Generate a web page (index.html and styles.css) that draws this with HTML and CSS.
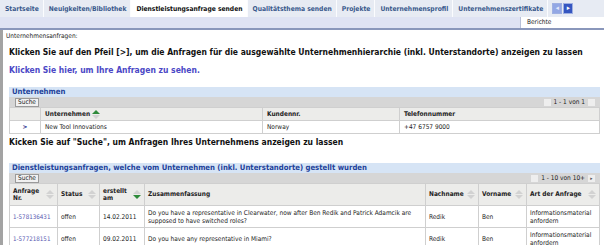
FILE: index.html
```html
<!DOCTYPE html>
<html lang="de">
<head>
    <meta charset="UTF-8">
    <title>Dienstleistungsanfrage senden</title>
    <link rel="stylesheet" href="styles.css">
</head>
<body>
    <div class="tabbar">
        <span class="tab">Startseite</span>
        <span class="tab">Neuigkeiten/Bibliothek</span>
        <span class="tab active">Dienstleistungsanfrage senden</span>
        <span class="tab">Qualitätsthema senden</span>
        <span class="tab">Projekte</span>
        <span class="tab">Unternehmensprofil</span>
        <span class="tab">Unternehmenszertifikate</span>
        <span class="tab-nav">
            <span class="nav-btn off">&#9666;</span>
            <span class="nav-btn">&#9656;</span>
        </span>
    </div>
    <div class="subbar">
        <span class="reports">Berichte</span>
    </div>

    <div class="content">
        <div class="crumb">Unternehmensanfragen:</div>
        <p class="hint">Klicken Sie auf den Pfeil [&gt;], um die Anfragen für die ausgewählte Unternehmenhierarchie (inkl. Unterstandorte) anzeigen zu lassen</p>
        <p class="hint link">Klicken Sie hier, um Ihre Anfragen zu sehen.</p>

        <!-- Unternehmen -->
        <div class="panel">
            <div class="panel-title">Unternehmen</div>
            <div class="toolbar">
                <button class="btn">Suche</button>
                <span class="pager">
                    <span class="pg off">&#9666;</span>
                    1 - 1 von 1
                    <span class="pg off">&#9656;</span>
                </span>
            </div>
            <table class="grid">
                <colgroup>
                    <col style="width:31px">
                    <col style="width:222px">
                    <col style="width:137px">
                    <col>
                </colgroup>
                <tr class="head">
                    <th></th>
                    <th>Unternehmen <span class="sort up"></span></th>
                    <th>Kundennr.</th>
                    <th>Telefonnummer</th>
                </tr>
                <tr>
                    <td class="pick">&gt;</td>
                    <td>New Tool Innovations</td>
                    <td>Norway</td>
                    <td>+47 6757 9000</td>
                </tr>
            </table>
        </div>

        <p class="hint second">Kicken Sie auf "Suche", um Anfragen Ihres Unternehmens anzeigen zu lassen</p>

        <!-- Anfragen -->
        <div class="panel requests-panel">
            <div class="panel-title">Dienstleistungsanfragen, welche vom Unternehmen (inkl. Unterstandorte) gestellt wurden</div>
            <div class="toolbar">
                <button class="btn">Suche</button>
                <span class="pager">
                    <span class="pg off">&#9666;</span>
                    1 - 10 von 10+
                    <span class="pg">&#9656;</span>
                </span>
            </div>
            <table class="grid requests">
                <colgroup>
                    <col style="width:48px">
                    <col style="width:42px">
                    <col style="width:45px">
                    <col style="width:281px">
                    <col style="width:53px">
                    <col style="width:48px">
                    <col>
                </colgroup>
                <tr class="head">
                    <th><span class="hcell">Anfrage<br>Nr.<span class="sort"></span></span></th>
                    <th><span class="hcell">Status<span class="sort"></span></span></th>
                    <th><span class="hcell">erstellt<br>am<span class="sort down"></span></span></th>
                    <th>Zusammenfassung</th>
                    <th><span class="hcell">Nachname<span class="sort"></span></span></th>
                    <th><span class="hcell">Vorname<span class="sort"></span></span></th>
                    <th><span class="hcell">Art der Anfrage<span class="sort"></span></span></th>
                </tr>
                <tr>
                    <td><a class="num" href="#">1-578136431</a></td>
                    <td>offen</td>
                    <td>14.02.2011</td>
                    <td>Do you have a representative in Clearwater, now after Ben Redik and Patrick Adamcik are supposed to have switched roles?</td>
                    <td>Redik</td>
                    <td>Ben</td>
                    <td>Informationsmaterial anfordern</td>
                </tr>
                <tr>
                    <td><a class="num" href="#">1-577218151</a></td>
                    <td>offen</td>
                    <td>09.02.2011</td>
                    <td>Do you have any representative in Miami?</td>
                    <td>Redik</td>
                    <td>Ben</td>
                    <td>Informationsmaterial anfordern</td>
                </tr>
            </table>
        </div>
    </div>
</body>
</html>
```

FILE: styles.css
```css
body {
    margin: 0;
    font-family: "DejaVu Sans Condensed", "DejaVu Sans", sans-serif;
    font-size: 7px;
    color: #222;
    background-color: #fff;
    overflow: hidden;
}

/* tabs */
.tabbar {
    display: flex;
    align-items: stretch;
    height: 17px;
    background-color: #e7ebf3;
    white-space: nowrap;
}

.tab {
    display: flex;
    align-items: center;
    padding: 0 4px 0 5px;
    border-right: 1px solid #fbfcfe;
    font-weight: bold;
    font-size: 6.7px;
    color: #39598c;
}

.tab.active {
    background-color: #fff;
    color: #111;
}

.tab-nav {
    display: flex;
    align-items: center;
    gap: 1px;
    padding-left: 4px;
}

.nav-btn {
    width: 8px;
    height: 9px;
    background-color: #3556c0;
    color: #fff;
    font-size: 7px;
    line-height: 9px;
    text-align: center;
    border: 1px solid #9fb0e2;
}

.nav-btn.off {
    background-color: #93a7e4;
    color: #e3e9fb;
}

.subbar {
    display: flex;
    justify-content: flex-end;
    height: 11px;
    background-color: #dfe3f3;
    border-bottom: 2px solid #8a97bb;
}

.reports {
    width: 77px;
    padding-left: 6px;
    background-color: #fff;
    border-left: 1px solid #b8c0d8;
    font-size: 6.5px;
    line-height: 11px;
}

/* main area */
.content {
    border-left: 3px solid #a3a3a3;
    padding: 2px 4px 0 6px;
    min-height: 220px;
}

.crumb {
    font-size: 6.5px;
    margin-left: -3px;
}

.hint {
    margin: 7px 0 0 0;
    font-weight: bold;
    font-size: 8.5px;
    color: #111;
}

.link {
    margin-top: 8px;
    color: #4b48c6;
}

.second {
    margin-top: 3px;
}

.panel {
    margin-top: 12px;
}

.requests-panel {
    margin-top: 16px;
}

.panel-title {
    height: 10px;
    line-height: 10px;
    padding-left: 3px;
    background-color: #d6e4f5;
    font-weight: bold;
    font-size: 7.7px;
    color: #21419a;
    white-space: nowrap;
}

.toolbar {
    display: flex;
    align-items: center;
    justify-content: space-between;
    height: 10px;
    padding: 0 5px 0 6px;
    background-color: #d6d6d6;
}

.btn {
    height: 9px;
    padding: 0 2px;
    border: 1px solid #9a9a9a;
    background-color: #f1f1f1;
    font-family: inherit;
    font-size: 6.5px;
    line-height: 6px;
    color: #222;
}

.pager {
    display: flex;
    align-items: center;
    gap: 3px;
    font-size: 6.5px;
}

.pg {
    width: 7px;
    height: 7px;
    background-color: #eee;
    color: #555;
    font-size: 5px;
    line-height: 7px;
    text-align: center;
}

.pg.off {
    color: #eee;
}

.grid {
    width: 100%;
    border-collapse: collapse;
    table-layout: fixed;
}

.grid th,
.grid td {
    border: 1px solid #cfcfcf;
    padding: 1px 4px;
    text-align: left;
    vertical-align: middle;
    font-size: 6.5px;
}

.grid th {
    height: 10px;
    background-color: #ececea;
    font-weight: bold;
    color: #222;
}

.grid td {
    height: 10px;
}

.pick {
    text-align: center !important;
    color: #1b2d8a;
    font-weight: bold;
}

.requests th,
.requests td {
    padding: 1px 3px;
}

.requests th {
    height: 19px;
    line-height: 7px;
}

.requests td {
    height: 19px;
    line-height: 8px;
}

.hcell {
    display: flex;
    align-items: center;
    justify-content: space-between;
}

.num {
    color: #5757b0;
    text-decoration: none;
    white-space: nowrap;
    font-size: 6.2px;
}

/* sort arrows */
.sort {
    display: inline-block;
    position: relative;
    flex: none;
    width: 8px;
    height: 9px;
    vertical-align: middle;
}

.sort::before,
.sort::after {
    content: "";
    position: absolute;
    left: 0;
    border-left: 4px solid transparent;
    border-right: 4px solid transparent;
}

.sort::before {
    top: 0;
    border-bottom: 4px solid #d2d2d2;
}

.sort::after {
    bottom: 0;
    border-top: 4px solid #d2d2d2;
}

.sort.up::before {
    border-bottom-color: #2e8a3a;
}

.sort.down::after {
    border-top-color: #2e8a3a;
}
```
